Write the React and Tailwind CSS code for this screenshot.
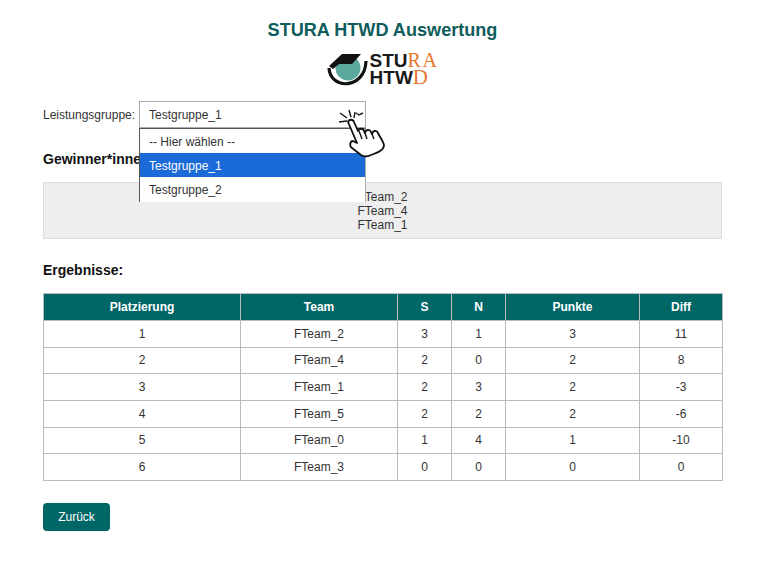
const rows = [
  [1, "FTeam_2", 3, 1, 3, 11],
  [2, "FTeam_4", 2, 0, 2, 8],
  [3, "FTeam_1", 2, 3, 2, -3],
  [4, "FTeam_5", 2, 2, 2, -6],
  [5, "FTeam_0", 1, 4, 1, -10],
  [6, "FTeam_3", 0, 0, 0, 0],
];

function Logo() {
  return (
    <div className="flex items-center justify-center h-[44px]">
      <svg width="42" height="44" viewBox="0 0 42 44" className="shrink-0">
        <circle cx="21" cy="21" r="12.5" fill="#5ba89f" />
        <path d="M2 21 C3 43 38 43 39 14" fill="none" stroke="#111" strokeWidth="3.2" />
        <path d="M2 19 L15 7 L34 7 L25 17 L12 17 L6 22 Z" fill="#111" />
      </svg>
      <div className="ml-[1px] flex flex-col text-[19px] leading-[17px] font-bold text-[#1a1a1a]">
        <div className="flex">
          <span>STU</span>
          <span className="font-['Liberation_Serif'] font-normal text-[#e8762b] text-[20px] tracking-[1.5px]">RA</span>
        </div>
        <div className="flex">
          <span>HTW</span>
          <span className="font-['Liberation_Serif'] font-normal text-[#e8762b] text-[21px]">D</span>
        </div>
      </div>
    </div>
  );
}

function Hand() {
  return (
    <svg width="80" height="65" viewBox="0 0 80 65" className="absolute left-[181px] top-[-2px] z-20">
      <path d="M35 13 L38 15 L42 13" fill="none" stroke="#222" strokeWidth="1.5" />
      <path d="M18 22 L26 21 M19 13 L26 18 M28 10 L30 17 M34 12 L33 18" stroke="#111" strokeWidth="1.4" fill="none" />
      <path
        d="M27 22 C28 19 32 19 33 22 L37 31 C38 28 42 28 43 31 L44 33 C45 29 49 29 50 32 L51 34 C52 30 56 30 57 33 C59 37 62 41 63 45 C63 50 58 52 50 55 C46 57 43 57 40 55 L31 48 C28 46 29 41 32 41 L36 43 Z"
        fill="#fff"
        stroke="#111"
        strokeWidth="1.8"
        strokeLinejoin="round"
      />
      <path d="M38 31 L41 39 M44 33 L46 39 M51 34 L53 39" stroke="#111" strokeWidth="1.4" fill="none" />
    </svg>
  );
}

export default function App() {
  return (
    <div className="w-[765px] h-[565px] overflow-hidden bg-white px-[43px] pt-[20px] font-['Liberation_Sans',sans-serif] text-[#222]">
      <h1 className="text-center text-[18.1px] leading-[21px] font-bold text-[#0f5c5c]">STURA HTWD Auswertung</h1>
      <div className="mt-[6px]">
        <Logo />
      </div>

      <div className="flex items-center mt-[10px]">
        <span className="text-[12px] w-[96px] text-[#333]">Leistungsgruppe:</span>
        <div className="relative w-[227px] h-[27px] border border-[#aaa] bg-white flex items-center px-[9px] text-[12px] text-[#333]">
          Testgruppe_1
          <Hand />
          <div className="absolute left-[-1px] top-[26px] w-[227px] h-[74px] overflow-hidden z-10 bg-white border-x border-t border-[#555] border-r-[#aaa] text-[12px] text-[#333]">
            <div className="h-[24px] px-[9px] pt-[2px] flex items-center">-- Hier wählen --</div>
            <div className="h-[24px] px-[9px] pt-[2px] flex items-center bg-[#1a6ad8] text-white">Testgruppe_1</div>
            <div className="h-[24px] px-[9px] pt-[2px] flex items-center">Testgruppe_2</div>
          </div>
        </div>
      </div>

      <h2 className="mt-[23px] text-[14px] leading-[17px] font-bold text-[#111]">Gewinner*innen:</h2>
      <div className="mt-[14px] h-[57px] border border-[#ddd] bg-[#eee] flex flex-col justify-center text-center text-[12px] leading-[14px] text-[#333]">
        <div>FTeam_2</div>
        <div>FTeam_4</div>
        <div>FTeam_1</div>
      </div>

      <h2 className="mt-[23px] text-[14px] leading-[17px] font-bold text-[#111]">Ergebnisse:</h2>
      <table className="mt-[14px] w-[679px] table-fixed border-collapse text-[12px] text-center text-[#333]">
        <colgroup>
          <col className="w-[197px]" />
          <col className="w-[157px]" />
          <col className="w-[54px]" />
          <col className="w-[54px]" />
          <col className="w-[134px]" />
          <col className="w-[83px]" />
        </colgroup>
        <thead>
          <tr className="h-[27px] bg-[#006666] text-white">
            {["Platzierung", "Team", "S", "N", "Punkte", "Diff"].map((h) => (
              <th key={h} className="border border-[#bbb] p-0 font-bold text-[12px]">{h}</th>
            ))}
          </tr>
        </thead>
        <tbody>
          {rows.map((r) => (
            <tr key={r[0]} className="h-[26.67px]">
              {r.map((c, i) => (
                <td key={i} className="border border-[#bbb] p-0">{c}</td>
              ))}
            </tr>
          ))}
        </tbody>
      </table>

      <button className="mt-[22px] block w-[67px] h-[28px] rounded-[4px] bg-[#006666] text-white text-[12px]">Zurück</button>
    </div>
  );
}
